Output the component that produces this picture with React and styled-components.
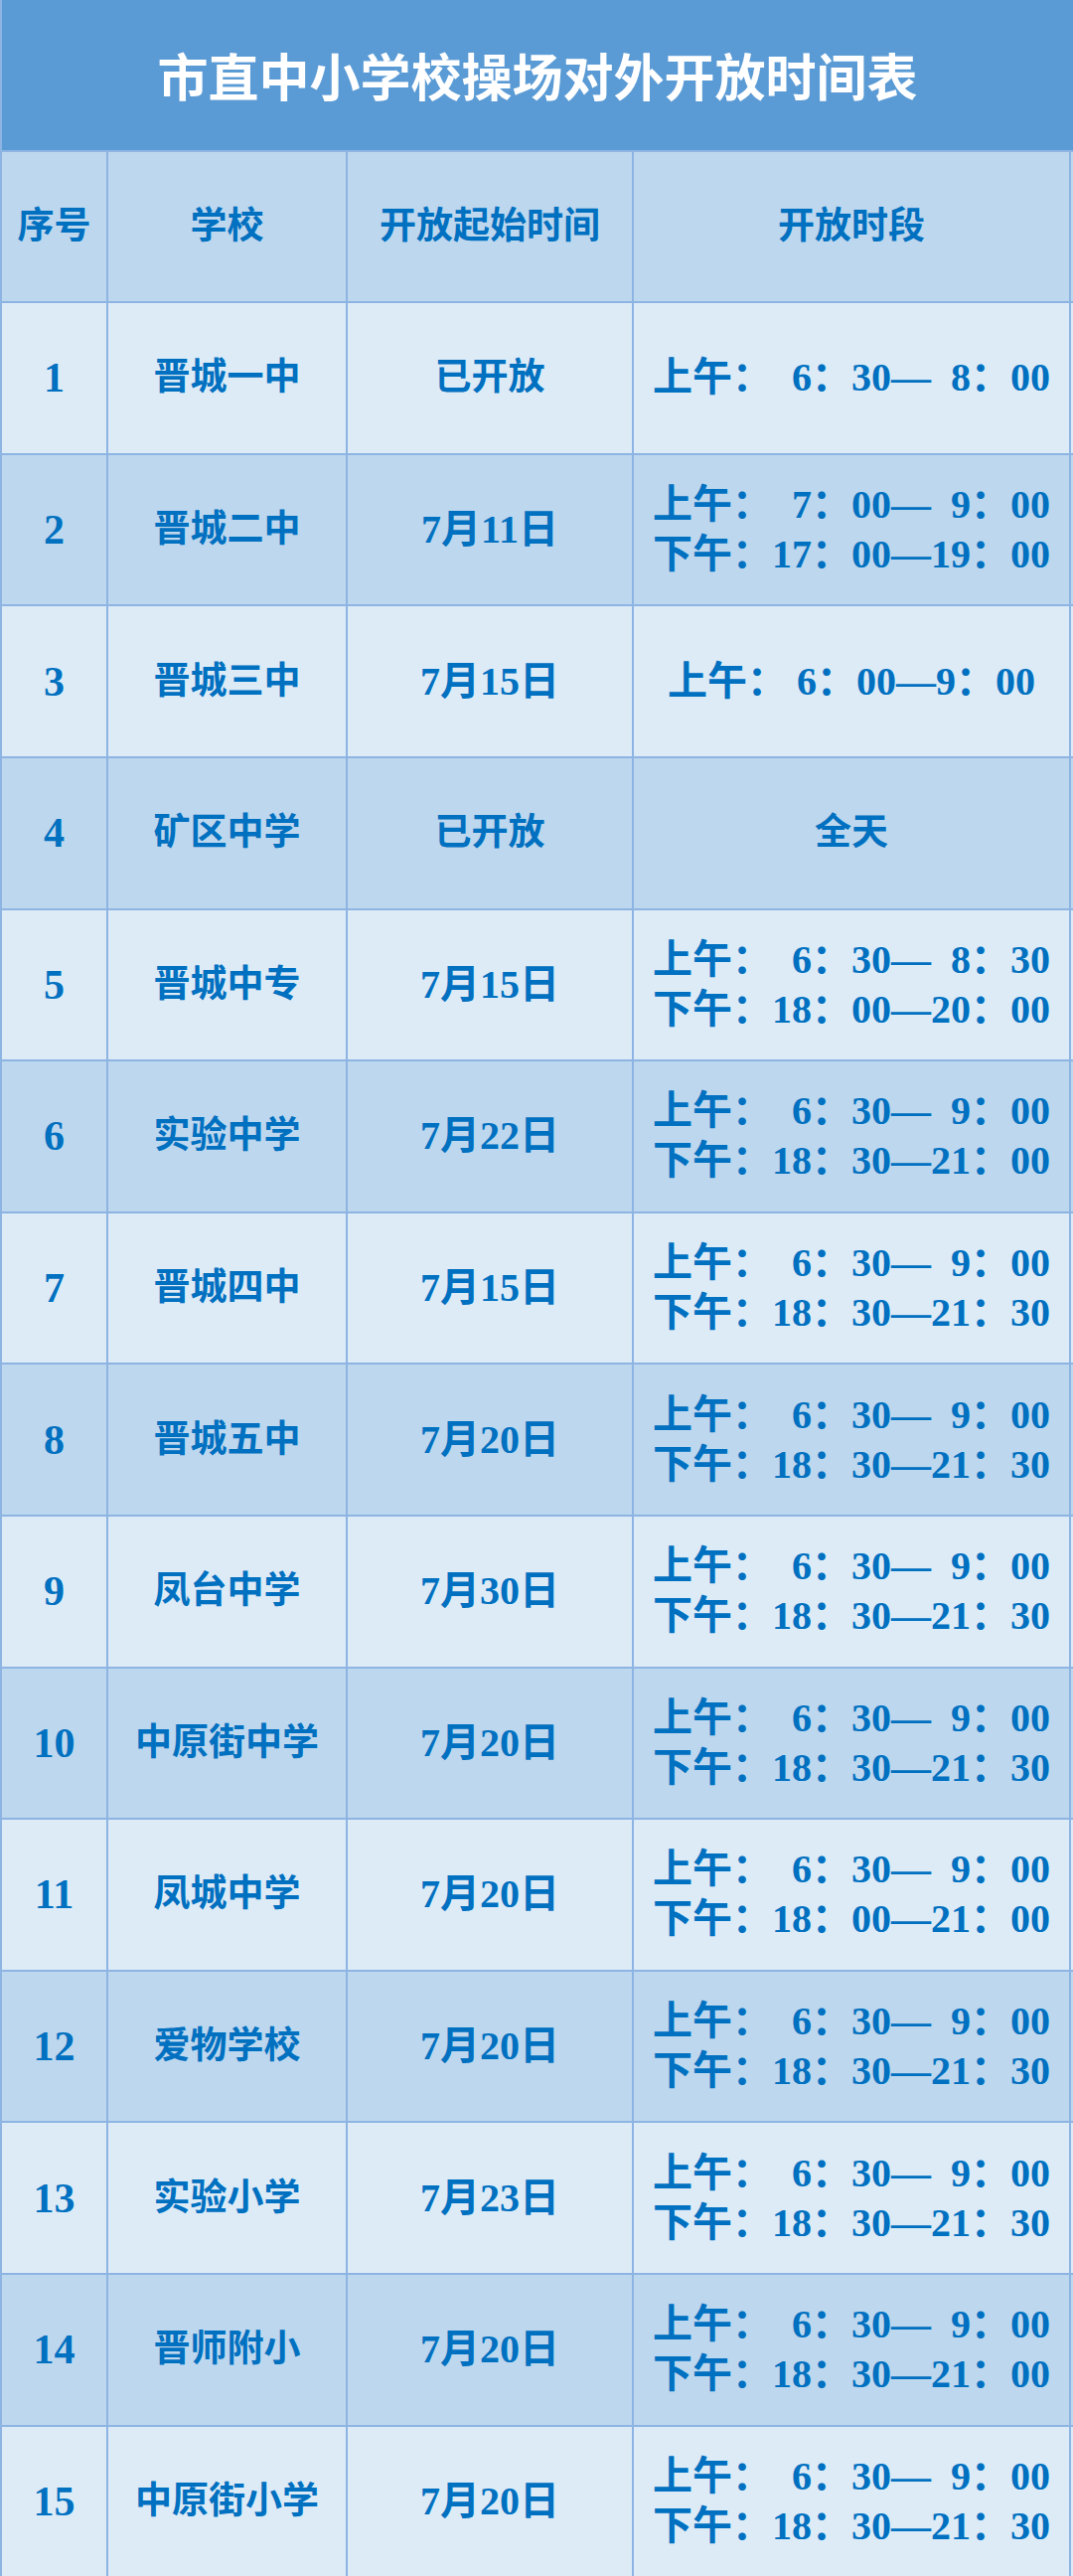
import React from "react";
import styled, { createGlobalStyle } from "styled-components";

const GlobalStyle = createGlobalStyle`
  html, body {
    margin: 0;
    padding: 0;
    background: #ddebf7;
  }
`;

const Page = styled.div`
  width: 1080px;
  height: 2592px;
  display: flex;
  flex-direction: column;
  box-sizing: border-box;
  border-left: 2px solid #8db4e2;
`;

const Title = styled.h1`
  flex: 1;
  margin: 0;
  display: flex;
  align-items: center;
  justify-content: center;
  background: #5b9bd5;
  color: #ffffff;
  font-family: "Noto Sans CJK SC", sans-serif;
  font-weight: 700;
  font-size: 51px;
  border-bottom: 2px solid #8db4e2;
`;

const Row = styled.div`
  flex: 1;
  display: grid;
  grid-template-columns: 107px 241px 288px 1fr;
  background: ${(p) => (p.$dark ? "#bdd7ee" : "#ddebf7")};
  border-bottom: 2px solid #8db4e2;
  &:last-child {
    border-bottom: none;
  }
`;

const Cell = styled.div`
  display: flex;
  flex-direction: column;
  align-items: center;
  justify-content: center;
  border-right: 2px solid #8db4e2;
  color: #0070c0;
  font-family: "Liberation Serif", "Noto Sans CJK SC", serif;
  font-weight: 700;
  font-size: ${(p) => (p.$cjk ? "37px" : "40px")};
  line-height: 50px;
  white-space: pre;
  &:last-child {
    margin-right: 2px;
  }
`;

const NumCell = styled(Cell)`
  font-size: 42px;
`;

const Slot = styled.span`
  display: inline-block;
  width: 1em;
  text-align: right;
`;

const rows = [
  ["1", "晋城一中", "已开放", [["上午", "6", "30", "8", "00"]]],
  ["2", "晋城二中", "7月11日", [["上午", "7", "00", "9", "00"], ["下午", "17", "00", "19", "00"]]],
  ["3", "晋城三中", "7月15日", "上午： 6：00—9：00"],
  ["4", "矿区中学", "已开放", "全天"],
  ["5", "晋城中专", "7月15日", [["上午", "6", "30", "8", "30"], ["下午", "18", "00", "20", "00"]]],
  ["6", "实验中学", "7月22日", [["上午", "6", "30", "9", "00"], ["下午", "18", "30", "21", "00"]]],
  ["7", "晋城四中", "7月15日", [["上午", "6", "30", "9", "00"], ["下午", "18", "30", "21", "30"]]],
  ["8", "晋城五中", "7月20日", [["上午", "6", "30", "9", "00"], ["下午", "18", "30", "21", "30"]]],
  ["9", "凤台中学", "7月30日", [["上午", "6", "30", "9", "00"], ["下午", "18", "30", "21", "30"]]],
  ["10", "中原街中学", "7月20日", [["上午", "6", "30", "9", "00"], ["下午", "18", "30", "21", "30"]]],
  ["11", "凤城中学", "7月20日", [["上午", "6", "30", "9", "00"], ["下午", "18", "00", "21", "00"]]],
  ["12", "爱物学校", "7月20日", [["上午", "6", "30", "9", "00"], ["下午", "18", "30", "21", "30"]]],
  ["13", "实验小学", "7月23日", [["上午", "6", "30", "9", "00"], ["下午", "18", "30", "21", "30"]]],
  ["14", "晋师附小", "7月20日", [["上午", "6", "30", "9", "00"], ["下午", "18", "30", "21", "00"]]],
  ["15", "中原街小学", "7月20日", [["上午", "6", "30", "9", "00"], ["下午", "18", "30", "21", "30"]]],
];

const TimeLine = ({ part }) => {
  const [label, h1, m1, h2, m2] = part;
  return (
    <div>
      {label}：<Slot>{h1}</Slot>：{m1}—<Slot>{h2}</Slot>：{m2}
    </div>
  );
};

export default function App() {
  return (
    <>
      <GlobalStyle />
      <Page>
        <Title>市直中小学校操场对外开放时间表</Title>
        <Row $dark>
          <Cell $cjk>序号</Cell>
          <Cell $cjk>学校</Cell>
          <Cell $cjk>开放起始时间</Cell>
          <Cell $cjk>开放时段</Cell>
        </Row>
        {rows.map(([no, school, start, times], i) => (
          <Row key={no} $dark={i % 2 === 1}>
            <NumCell>{no}</NumCell>
            <Cell $cjk>{school}</Cell>
            <Cell $cjk={!/\d/.test(start)}>{start}</Cell>
            <Cell $cjk={!Array.isArray(times) && !/\d/.test(times)}>
              {Array.isArray(times)
                ? times.map((t) => <TimeLine key={t[0]} part={t} />)
                : times}
            </Cell>
          </Row>
        ))}
      </Page>
    </>
  );
}
